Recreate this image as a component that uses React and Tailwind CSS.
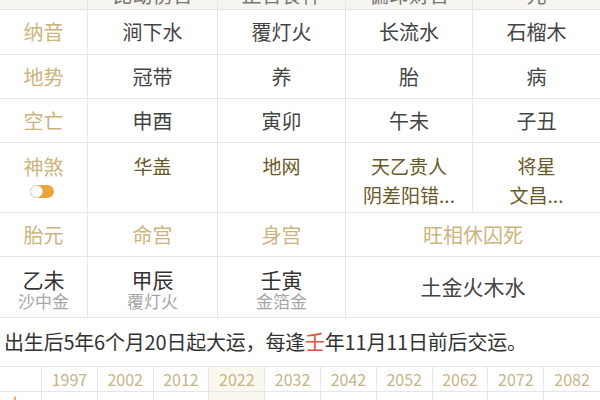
import React from 'react';

const font = { fontFamily: '"Noto Sans CJK SC", "Noto Sans", sans-serif' };

const headers = ['', '比劫伤官', '正官食神', '偏印财官', '元'];

const rows = [
  { label: '纳音', values: ['涧下水', '覆灯火', '长流水', '石榴木'], h: 'h-[45px]' },
  { label: '地势', values: ['冠带', '养', '胎', '病'], h: 'h-[44px]' },
  { label: '空亡', values: ['申酉', '寅卯', '午未', '子丑'], h: 'h-[44px]' },
];

const shensha = [['华盖'], ['地网'], ['天乙贵人', '阴差阳错...'], ['将星', '文昌...']];

const years = ['1997', '2002', '2012', '2022', '2032', '2042', '2052', '2062', '2072', '2082'];

function Toggle() {
  return (
    <div className="relative w-[24px] h-[13px] rounded-full bg-[#eba43c] mt-[6px] -ml-[4px]">
      <div className="absolute left-0 top-0 w-[13px] h-[13px] rounded-full bg-white border border-[#d8d8d8]" />
    </div>
  );
}

export default function App() {
  return (
    <div className="w-[600px] h-[400px] overflow-hidden bg-white" style={font}>
      {/* main pillar table */}
      <div className="grid grid-cols-[88px_130px_128px_127px_127px] -mt-[35px]">
        {headers.map((h, i) => (
          <div
            key={'h' + i}
            className={`h-[45px] bg-[#f6f5f1] border-b border-[#e6e6e6] flex items-end justify-center pb-[3px] text-[20px] leading-[22px] text-[#777] ${i < 4 ? 'border-r' : ''}`}
          >
            {h}
          </div>
        ))}

        {rows.map((r) => (
          <React.Fragment key={r.label}>
            <div className={`${r.h} border-b border-r border-[#e6e6e6] flex items-center justify-center text-[20px] text-[#cdb47c]`}>
              {r.label}
            </div>
            {r.values.map((v, i) => (
              <div
                key={v}
                className={`${r.h} border-b border-[#e6e6e6] flex items-center justify-center text-[20px] text-[#444] ${i < 3 ? 'border-r' : ''}`}
              >
                {v}
              </div>
            ))}
          </React.Fragment>
        ))}

        {/* 神煞 row */}
        <div className="h-[70px] border-b border-r border-[#e6e6e6] flex flex-col items-center pt-[12px]">
          <span className="text-[20px] leading-[24px] text-[#cdb47c]">神煞</span>
          <Toggle />
        </div>
        {shensha.map((list, i) => (
          <div
            key={i}
            className={`h-[70px] border-b border-[#e6e6e6] flex flex-col items-center pt-[8px] text-[19px] leading-[29px] text-[#6b5828] ${i < 3 ? 'border-r' : ''}`}
          >
            {list.map((s) => (
              <span key={s}>{s}</span>
            ))}
          </div>
        ))}

        {/* 胎元 row */}
        {['胎元', '命宫', '身宫'].map((t) => (
          <div key={t} className="h-[44px] border-b border-r border-[#e6e6e6] flex items-center justify-center text-[20px] text-[#cdb47c]">
            {t}
          </div>
        ))}
        <div className="col-span-2 h-[44px] border-b border-[#e6e6e6] flex items-center justify-center text-[20px] text-[#cdb47c]">
          旺相休囚死
        </div>

        {/* 干支 row */}
        {[
          ['乙未', '沙中金'],
          ['甲辰', '覆灯火'],
          ['壬寅', '金箔金'],
        ].map(([a, b]) => (
          <div key={a} className="h-[61px] border-b border-r border-[#e6e6e6] flex flex-col items-center justify-center pt-[4px]">
            <span className="text-[21px] leading-[22px] text-[#333]">{a}</span>
            <span className="text-[17px] leading-[19px] mt-[1px] text-[#a5a5a5]">{b}</span>
          </div>
        ))}
        <div className="col-span-2 h-[61px] border-b border-[#e6e6e6] flex items-center justify-center text-[21px] text-[#444]">
          土金火木水
        </div>
      </div>

      {/* 起运 text */}
      <div className="h-[49px] border-b border-[#e6e6e6] flex items-center pl-[4px] text-[20px] text-[#333] tracking-[-0.2px]">
        出生后5年6个月20日起大运，每逢<span className="text-[#e0533d]">壬</span>年11月11日前后交运。
      </div>

      {/* 大运 table */}
      <div className="grid grid-cols-[42px_repeat(10,1fr)]">
        <div className="h-[25px] border-r border-b border-[#e6e6e6]" />
        {years.map((y, i) => (
          <div
            key={y}
            className={`h-[25px] border-b border-[#e6e6e6] flex items-center justify-center text-[16px] text-[#c7b487] ${i < 9 ? 'border-r' : ''} ${y === '2022' ? 'bg-[#fbf8ef]' : ''}`}
          >
            {y}
          </div>
        ))}
        <div className="h-[40px] border-r border-[#e6e6e6] flex justify-start pl-[6px] pt-[1px] text-[18px] leading-[22px] text-[#e39a3c]">
          小
        </div>
        {years.map((y, i) => (
          <div
            key={'b' + y}
            className={`h-[40px] border-[#e6e6e6] ${i < 9 ? 'border-r' : ''} ${y === '2022' ? 'bg-[#fbf8ef]' : ''}`}
          />
        ))}
      </div>
    </div>
  );
}
